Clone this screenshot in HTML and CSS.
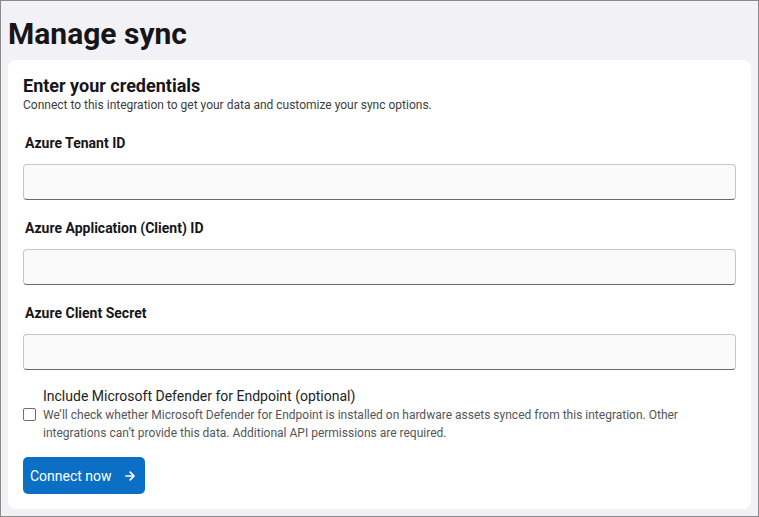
FILE: index.html
```html
<!DOCTYPE html>
<html lang="en">

<head>
    <meta charset="UTF-8">
    <meta name="viewport" content="width=device-width, initial-scale=1.0">
    <title>Manage sync</title>
    <link rel="stylesheet" href="styles.css">
</head>

<body>
    <h1 class="title">Manage sync</h1>
    <div class="card">
        <h2 class="card-title">Enter your credentials</h2>
        <p class="card-sub">Connect to this integration to get your data and customize your sync options.</p>

        <div class="field">
            <label class="field-label">Azure Tenant ID</label>
            <input class="field-input" type="text">
        </div>
        <div class="field">
            <label class="field-label">Azure Application (Client) ID</label>
            <input class="field-input" type="text">
        </div>
        <div class="field">
            <label class="field-label">Azure Client Secret</label>
            <input class="field-input" type="text">
        </div>

        <div class="check-row">
            <span class="check-box"></span>
            <div class="check-text">
                <div class="check-label">Include Microsoft Defender for Endpoint (optional)</div>
                <div class="check-desc">We’ll check whether Microsoft Defender for Endpoint is installed on hardware assets synced from this integration. Other integrations can’t provide this data. Additional API permissions are required.</div>
            </div>
        </div>

        <button class="btn">
            Connect now
            <svg width="10" height="10" viewBox="0 0 10 10">
                <path d="M1 5h8M5.2 1.2L9 5L5.2 8.8" fill="none" stroke="#fff" stroke-width="1.7" stroke-linecap="round" stroke-linejoin="round" />
            </svg>
        </button>
    </div>
</body>

</html>
```

FILE: styles.css
```css
* {
    box-sizing: border-box;
}

body {
    margin: 0;
    height: 517px;
    padding: 0 7px;
    border: 1px solid #8a8a8a;
    background: #f1f1f6;
    font-family: Roboto, "Liberation Sans", sans-serif;
    color: #1a1a1a;
    overflow: hidden;
}

.title {
    margin: 15px 0 8px;
    font-size: 30px;
    line-height: 36px;
    font-weight: 700;
    color: #16161a;
}

/* 卡片 */
.card {
    background: #fff;
    border-radius: 8px;
    padding: 15px 15px 15px;
}

.card-title {
    margin: 0;
    font-size: 18px;
    line-height: 22px;
    font-weight: 700;
    color: #16161a;
}

.card-sub {
    margin: 0;
    font-size: 12px;
    line-height: 16px;
    color: #3c3c40;
}

/* 输入框 */
.field {
    margin-top: 18px;
}

.card-sub + .field {
    margin-top: 20px;
}

.field-label {
    display: block;
    padding-left: 2px;
    font-size: 14px;
    line-height: 20px;
    font-weight: 700;
    color: #16161a;
}

.field-input {
    display: block;
    width: 100%;
    height: 36px;
    margin-top: 11px;
    background: #fafafa;
    border: 1px solid #c6c6c6;
    border-bottom-color: #6a6a6a;
    border-radius: 4px;
    outline: none;
}

/* 勾选 */
.check-row {
    display: flex;
    align-items: center;
    margin-top: 16px;
}

.check-box {
    flex: none;
    width: 13px;
    height: 13px;
    border: 1px solid #6e6e6e;
    border-radius: 2px;
    background: #fff;
    margin-right: 7px;
}

.check-label {
    font-size: 14px;
    line-height: 20px;
    color: #222;
}

.check-desc {
    font-size: 12px;
    line-height: 18px;
    color: #55555a;
}

.btn {
    display: inline-flex;
    align-items: center;
    gap: 13px;
    height: 37px;
    margin-top: 15px;
    padding: 1px 10px 0 7px;
    border: none;
    border-radius: 5px;
    background: #0b6fc6;
    color: #fff;
    font-family: Roboto, "Liberation Sans", sans-serif;
    font-size: 14px;
}
```
